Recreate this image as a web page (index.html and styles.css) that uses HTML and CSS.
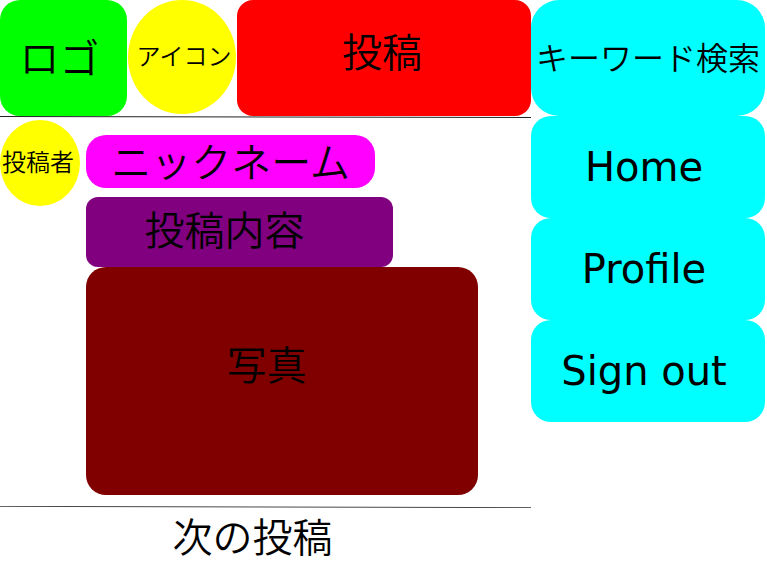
FILE: index.html
```html
<!DOCTYPE html>
<html lang="ja">
<head>
<meta charset="utf-8">
<meta name="viewport" content="width=device-width, initial-scale=1">
<title>投稿</title>
<link rel="stylesheet" href="styles.css">
</head>
<body>
<div class="layout">
  <main class="timeline">
    <header class="topbar">
      <a class="logo" href="#">ロゴ</a>
      <a class="icon" href="#">アイコン</a>
      <button class="submit" type="button">投稿</button>
    </header>
    <svg class="rule" viewBox="0 0 531 2" preserveAspectRatio="none" aria-hidden="true"><path d="M0 .5 531 1.5"/></svg>
    <article class="post">
      <div class="author">投稿者</div>
      <div class="post-body">
        <h2 class="nickname">ニックネーム</h2>
        <p class="content">投稿内容</p>
        <div class="photo">写真</div>
      </div>
    </article>
    <svg class="rule" viewBox="0 0 531 3" preserveAspectRatio="none" aria-hidden="true"><path d="M0 .5 531 2.5"/></svg>
    <p class="next">次の投稿</p>
  </main>
  <aside class="side">
    <input class="search" type="text" placeholder="キーワード検索" aria-label="キーワード検索">
    <nav class="menu">
      <a class="menu-item" href="#">Home</a>
      <a class="menu-item" href="#">Profile</a>
      <a class="menu-item" href="#">Sign out</a>
    </nav>
  </aside>
</div>
</body>
</html>
```
FILE: styles.css
```css
* {
  box-sizing: border-box;
}

body {
  margin: 0;
  background: #fff;
  color: #000;
  font-family: "Noto Sans CJK JP", sans-serif;
  font-weight: 350;
  font-size: 40px;
  line-height: 48px;
}

a {
  color: inherit;
  text-decoration: none;
}

h2,
p {
  margin: 0;
  font-size: inherit;
  font-weight: inherit;
}

button,
input {
  margin: 0;
  border: 0;
  color: inherit;
  font: inherit;
}

.layout {
  display: grid;
  grid-template-columns: minmax(0, 9fr) minmax(0, 4fr);
  align-items: start;
}

.topbar {
  display: grid;
  grid-template-columns: 127fr 108fr 294fr;
  column-gap: 1px;
  min-height: 116px;
}

.logo,
.icon,
.submit,
.author,
.nickname,
.content,
.photo,
.menu-item {
  display: flex;
  align-items: center;
  justify-content: center;
  white-space: nowrap;
}

.logo {
  padding: 0 8px 4px 0;
  border-radius: 20px;
  background: #0f0;
}

.icon {
  margin-bottom: 2px;
  padding: 0 0 4px 4px;
  border-radius: 50%;
  background: #ff0;
  font-size: 24px;
}

.submit {
  padding: 0 4px 16px 0;
  border-radius: 16px;
  background: #f00;
}

.rule {
  display: block;
  width: 100%;
  height: 2px;
  fill: none;
  stroke: #222;
}

.post {
  display: grid;
  grid-template-columns: 80px minmax(0, 1fr);
  column-gap: 6px;
  align-items: start;
  padding: 2px 0 11px;
}

.author {
  height: 86px;
  padding: 0 4px 4px 0;
  border-radius: 50%;
  background: #ff0;
  font-size: 24px;
}

.post-body {
  padding-top: 15px;
}

.nickname {
  width: 65%;
  height: 53px;
  padding-bottom: 4px;
  margin-bottom: 9px;
  border-radius: 20px;
  background: #f0f;
}

.content {
  width: 69%;
  height: 70px;
  padding: 0 30px 8px 0;
  border-radius: 12px;
  background: #800080;
}

.photo {
  width: 88%;
  height: 228px;
  padding: 0 30px 36px 0;
  border-radius: 20px;
  background: #800000;
}

.next {
  padding: 3px 26px 0 0;
  text-align: center;
}

.side {
  padding-right: 2px;
}

.search {
  display: block;
  width: 100%;
  height: 116px;
  padding: 0 4px 4px;
  border-radius: 28px;
  background: #0ff;
  font-size: 32px;
  text-align: center;
}

.search::placeholder {
  color: #000;
  opacity: 1;
}

.menu {
  display: grid;
  font-family: "DejaVu Sans", sans-serif;
  font-weight: 400;
}

.menu-item {
  height: 102px;
  padding: 0 8px 0 0;
  border-radius: 20px;
  background: #0ff;
}
```
